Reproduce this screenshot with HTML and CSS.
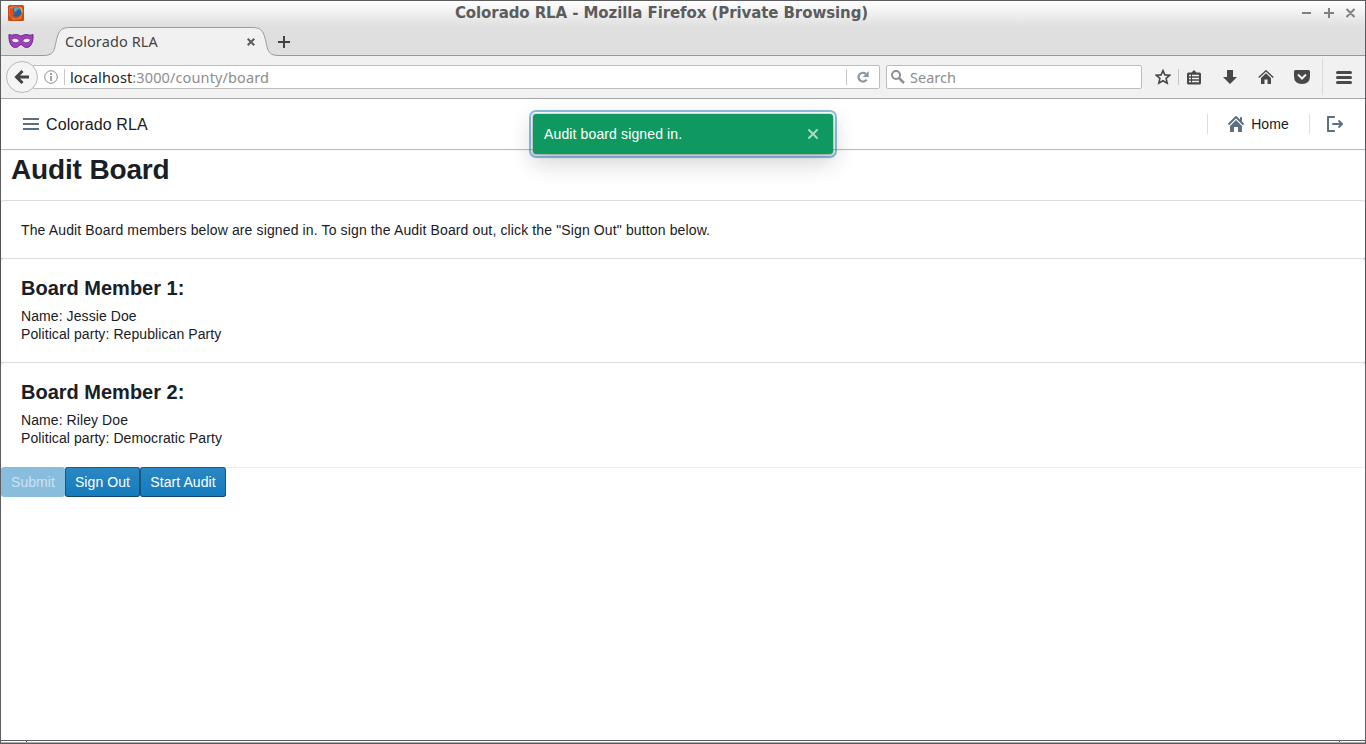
FILE: index.html
```html
<!DOCTYPE html>
<html lang="en">
<head>
<meta charset="utf-8">
<title>Colorado RLA</title>
<link rel="stylesheet" href="styles.css">
</head>
<body>
<div class="window">
  <header class="titlebar">
    <svg class="firefox" width="16" height="16" viewBox="0 0 16 16"><rect width="16" height="16" rx="1.5" fill="#c9471b"/><path d="M1 2l4-1 9 1 1 5-2 7-8 1-4-5z" fill="#e8782a"/><circle cx="8.600" cy="7" r="5.300" fill="#2c5f93"/><path d="M6 3c2-2 5-1 6 1l-3 1-1 2-2-1z" fill="#5f9fc9"/><path d="M2 3l2 1 2 .5L5 6.500l2 2-2 2c1 2 5 2 8-1-1 4-5 5-8 3.500C1.500 11 1 7 2 3z" fill="#d9501c"/><path d="M11 1.500c3 1 4 4 3 7l-1-3z" fill="#f6b23c"/></svg>
    <div class="title">Colorado RLA - Mozilla Firefox (Private Browsing)</div>
    <svg class="controls" width="56" height="12" viewBox="0 0 56 12" fill="none" stroke="#808080" stroke-width="2"><path d="M1 6h9M23 6h10M28 1v10M45.500 2l8 8M53.500 2l-8 8"/></svg>
  </header>
  <div class="tabs">
    <svg class="mask" width="26" height="16" viewBox="0 0 26 16"><path d="M1 1.500c3 1.500 5 0 7.500 0 2 0 3 1.500 4.500 1.500s2.500-1.500 4.500-1.500c2.500 0 4.500 1.500 7.500 0 .5 5-1 13-6.500 13-3 0-4-3-5.500-3s-2.500 3-5.500 3C2 14.500.5 6.500 1 1.500z" fill="#a13fc0" stroke="#6b2b80"/><path d="M3.500 7c2.500-3 6.500-2 8 1-2.500 2.500-6.500 2.500-8-1zM22.500 7c-2.500-3-6.500-2-8 1 2.500 2.500 6.500 2.500 8-1z" fill="#eee" stroke="#6b2b80" stroke-width=".8"/></svg>
    <div class="tab">
      <svg class="tab-shape" width="236" height="30" viewBox="0 0 236 30"><path d="M0 29.500C13 29.500 11 22 14 12 16 4 19 1.500 27 1.500H209c8 0 11 2.500 13 10.500 3 10 1 17.500 14 17.500V30H0z" fill="#f1f1f1"/><path d="M0 29.500C13 29.500 11 22 14 12 16 4 19 1.500 27 1.500H209c8 0 11 2.500 13 10.500 3 10 1 17.500 14 17.500" fill="none" stroke="#989da2"/></svg>
      <span class="tab-label">Colorado RLA</span>
      <svg class="tab-close" width="8" height="8" viewBox="0 0 8 8" stroke="#5c5c5c" stroke-width="2"><path d="M.7.7l6.600 6.600M7.300.7L.7 7.300"/></svg>
    </div>
    <svg class="plus" width="12" height="12" viewBox="0 0 12 12" stroke="#444" stroke-width="2"><path d="M0 6h12M6 0v12"/></svg>
  </div>
  <div class="toolbar">
    <div class="back"><svg width="16" height="14" viewBox="0 0 16 14" fill="none" stroke="#444" stroke-width="3"><path d="M2.500 7H15M8.500 1L2.500 7l6 6"/></svg></div>
    <div class="urlbar">
      <svg class="info" width="14" height="14" viewBox="0 0 14 14"><circle cx="7" cy="7" r="6.300" fill="none" stroke="#8b8b8b"/><path d="M7 3v2M7 6v5" stroke="#8b8b8b" stroke-width="1.600"/></svg>
      <span class="sep"></span>
      <span class="url"><b>localhost</b>:3000/county/board</span>
      <span class="sep reload-sep"></span>
      <svg class="reload" width="12" height="12" viewBox="0 0 12 12"><path d="M9.600 8.600A4.400 4.400 0 1 1 8.800 2.800" fill="none" stroke="#8996a3" stroke-width="2.200"/><path d="M11.700 0v6H5.700z" fill="#8996a3"/></svg>
    </div>
    <div class="search">
      <svg width="14" height="14" viewBox="0 0 14 14" fill="none" stroke="#909090"><circle cx="5" cy="5" r="4" stroke-width="2"/><path d="M8 8l5 5" stroke-width="2.500"/></svg>
      <span>Search</span>
    </div>
    <svg class="star" width="16" height="16" viewBox="0 0 16 16"><path d="M8 1.500l1.900 4.400 4.800.4-3.600 3.100 1.100 4.800L8 11.700l-4.200 2.500 1.100-4.800L1.300 6.300l4.800-.4z" fill="none" stroke="#484848" stroke-width="1.600"/></svg>
    <span class="sep star-sep"></span>
    <svg class="clip" width="14" height="15" viewBox="0 0 14 15"><path d="M1.500 2.500h3L7 0l2.500 2.500h3q1.500 0 1.500 1.500v9q0 1.500-1.500 1.500h-11Q0 14.500 0 13V4q0-1.500 1.500-1.500z" fill="#484848"/><path d="M2 5.500h2M5 5.500h7M2 8.500h2M5 8.500h7M2 11.500h2M5 11.500h7" stroke="#f1f1f1" stroke-width="1.700"/></svg>
    <svg class="down" width="14" height="14" viewBox="0 0 14 14"><path d="M4 0h6v7h4l-7 7-7-7h4z" fill="#484848"/></svg>
    <svg class="home" width="16" height="14" viewBox="0 0 16 14"><path d="M.7 7.500L8 .8l7.300 6.700" fill="none" stroke="#484848" stroke-width="1.400"/><path d="M3 8l5-4.800L13 8v6H9.500V9.500h-3V14H3z" fill="#484848"/></svg>
    <svg class="pocket" width="16" height="14" viewBox="0 0 16 14"><path d="M1.500 0h13Q16 0 16 1.500V6q0 8-8 8T0 6V1.500Q0 0 1.500 0z" fill="#484848"/><path d="M4 4.500l4 4 4-4" fill="none" stroke="#f1f1f1" stroke-width="2"/></svg>
    <span class="menu-sep"></span>
    <svg class="menu" width="16" height="13" viewBox="0 0 16 13" stroke="#484848" stroke-width="3" stroke-linecap="round"><path d="M1.500 1.500h13M1.500 6.500h13M1.500 11.500h13"/></svg>
  </div>
  <main class="page">
    <nav class="navbar">
      <svg width="16" height="12" viewBox="0 0 16 12" fill="#5c7080"><path d="M0 0h16v2H0zM0 5h16v2H0zM0 10h16v2H0z"/></svg>
      <span class="brand">Colorado RLA</span>
      <span class="divider"></span>
      <a class="home-link"><svg width="16" height="16" viewBox="0 0 16 16" fill="#5c7080"><path d="M2 10v6h4v-5h4v5h4v-6L8 4z"/><path d="M15.700 7.300L14 5.600V2c0-.6-.4-1-1-1s-1 .4-1 1v1.600L8.700.3a1 1 0 0 0-1.400 0l-7 7a1 1 0 0 0 1.400 1.400L8 2.400l6.300 6.300a1 1 0 0 0 1.400-1.400z"/></svg><span>Home</span></a>
      <span class="divider"></span>
      <svg class="logout" width="16" height="16" viewBox="0 0 16 16" fill="#5c7080"><path d="M7 14H2V2h5c.6 0 1-.4 1-1s-.4-1-1-1H1C.4 0 0 .4 0 1v14c0 .6.400 1 1 1h6c.6 0 1-.4 1-1s-.4-1-1-1z"/><path d="M15.700 7.300l-3-3a1 1 0 0 0-1.400 1.400L12.600 7H6a1 1 0 0 0 0 2h6.600l-1.300 1.300a1 1 0 0 0 1.400 1.400l3-3a1 1 0 0 0 0-1.400z"/></svg>
    </nav>
    <h1>Audit Board</h1>
    <section class="card">The Audit Board members below are signed in. To sign the Audit Board out, click the "Sign Out" button below.</section>
    <section class="card member"><h3>Board Member 1:</h3><div>Name: Jessie Doe</div><div>Political party: Republican Party</div></section>
    <section class="card member last"><h3>Board Member 2:</h3><div>Name: Riley Doe</div><div>Political party: Democratic Party</div></section>
    <div class="actions"><button class="btn submit" disabled>Submit</button><button class="btn signout">Sign Out</button><button class="btn start">Start Audit</button></div>
    <div class="toast"><span>Audit board signed in.</span><svg width="12" height="12" viewBox="0 0 12 12" stroke="#a9dac5" stroke-width="2" stroke-linecap="round"><path d="M2 2l8 8M10 2l-8 8"/></svg></div>
  </main>
  <footer class="frame-bottom"></footer>
</div>
</body>
</html>
```
FILE: styles.css
```css
* { box-sizing: border-box; }
body { margin: 0; overflow: hidden; }
svg { display: block; flex: none; }
.window { width: 1366px; height: 744px; border: 1px solid #5d5d5f; background: #fff; display: flex; flex-direction: column; }
.titlebar { height: 25px; flex: none; display: flex; align-items: center; justify-content: space-between; padding: 0 8px 1px 7px; background: linear-gradient(#fff, #e0e0e0); }
.title { margin-right: 2px; font: bold 15px/22px "DejaVu Sans", sans-serif; letter-spacing: -.09px; color: #5c5c5c; white-space: nowrap; }
.tabs { height: 30px; flex: none; display: flex; align-items: center; background: #dfdfdf; border-bottom: 1px solid #989898; }
.mask { margin-left: 7px; }
.tab { position: relative; width: 236px; height: 30px; margin-left: 9px; display: flex; align-items: center; padding: 1px 24px 0 22px; font: 14.5px/20px "Noto Sans", sans-serif; letter-spacing: .1px; color: #444; }
.tab-shape { position: absolute; left: 0; top: 0; }
.tab-label, .tab-close { position: relative; }
.tab-close { margin: 1px 0 0 auto; }
.plus { margin: 3px 0 0 -1px; }
.toolbar { height: 43px; flex: none; display: flex; align-items: center; background: #f1f1f1; border-bottom: 1px solid #b9b9b9; font: 14.5px/20px "Noto Sans", sans-serif; color: #8d8d8d; }
.back { position: relative; width: 32px; height: 32px; margin-left: 5px; border: 1px solid #b9b9b9; border-radius: 50%; background: #f5f5f5; display: flex; align-items: center; justify-content: center; }
.urlbar { width: 847px; height: 24px; margin-left: -5px; border: 1px solid #bdbdbd; border-radius: 0 2px 2px 0; background: #fff; display: flex; align-items: center; }
.info { margin-left: 10px; }
.sep { width: 1px; height: 16px; background: #c6c6c6; }
.info + .sep { margin-left: 6px; }
.url { margin: 0 0 1px 5px; letter-spacing: .12px; }
.url b { font-weight: normal; color: #222; }
.reload-sep { margin-left: auto; }
.reload { margin: 0 10px; }
.search { width: 256px; height: 24px; margin-left: 6px; border: 1px solid #bdbdbd; border-radius: 2px; background: #fff; display: flex; align-items: center; gap: 5px; padding-left: 4px; }
.search span { margin-bottom: 1px; }
.star { margin-left: 13px; }
.star-sep { margin-left: 7px; }
.clip { margin-left: 8px; }
.down { margin-left: 22px; }
.home { margin-left: 21px; }
.pocket { margin-left: 20px; }
.menu-sep { width: 1px; height: 36px; margin-left: 12px; background: #dadada; }
.menu { margin-left: 13px; }
.page { position: relative; flex: 1; font: 14px/18px "Liberation Sans", Arial, sans-serif; letter-spacing: .13px; color: #182026; }
.navbar { height: 50px; display: flex; align-items: center; padding: 0 22px; box-shadow: 0 0 0 1px rgba(16,22,26,.1), 0 1px 1px rgba(16,22,26,.2); }
.brand { margin: 0 auto 0 7px; padding-top: 1px; font-size: 16px; letter-spacing: .1px; }
.divider { width: 1px; height: 20px; background: rgba(16,22,26,.15); }
.home-link { display: flex; align-items: center; gap: 7px; margin: 0 20px; }
.logout { margin-left: 17px; }
h1 { margin: 0; height: 52px; padding: 3px 10px 0; font-size: 28px; line-height: 36px; letter-spacing: -.15px; }
.card { padding: 20px; border-radius: 3px; background: #fff; box-shadow: 0 0 0 1px rgba(16,22,26,.15); }
.member { letter-spacing: .08px; }
.last { box-shadow: 0 -1px 0 rgba(16,22,26,.15), 0 1px 0 rgba(16,22,26,.08); }
h3 { margin: 0 0 10px; font-size: 20px; line-height: 18px; letter-spacing: 0; }
.actions { position: relative; display: flex; }
.btn { height: 30px; padding: 0; border: 0; border-radius: 3px; font: 14px/30px "Liberation Sans", Arial, sans-serif; letter-spacing: .08px; color: #fff; background: linear-gradient(#2b87c3, #137cbd); box-shadow: inset 0 0 0 1px rgba(16,22,26,.4), inset 0 -1px 0 rgba(16,22,26,.2); }
.submit { width: 64px; background: #89bdde; box-shadow: none; color: #cce2f1; }
.signout { width: 75px; }
.start { width: 86px; }
.toast { position: absolute; left: 532px; top: 15px; width: 300px; height: 40px; padding: 0 14px 0 11px; display: flex; align-items: center; justify-content: space-between; border-radius: 3px; background: #0f9960; color: #fff; outline: 2px solid rgba(19,124,189,.5); outline-offset: 2px; box-shadow: 0 0 0 1px rgba(16,22,26,.1), 0 2px 4px rgba(16,22,26,.2), 0 8px 24px rgba(16,22,26,.2); }
.frame-bottom { height: 3px; flex: none; border-top: 1px solid #5d5d5f; border-bottom: 1px solid #aaa; background: linear-gradient(90deg, #fff 25px, #5d5d5f 25px, #5d5d5f 26px, #fff 26px, #fff 1338px, #5d5d5f 1338px, #5d5d5f 1339px, #fff 1339px); }
```
